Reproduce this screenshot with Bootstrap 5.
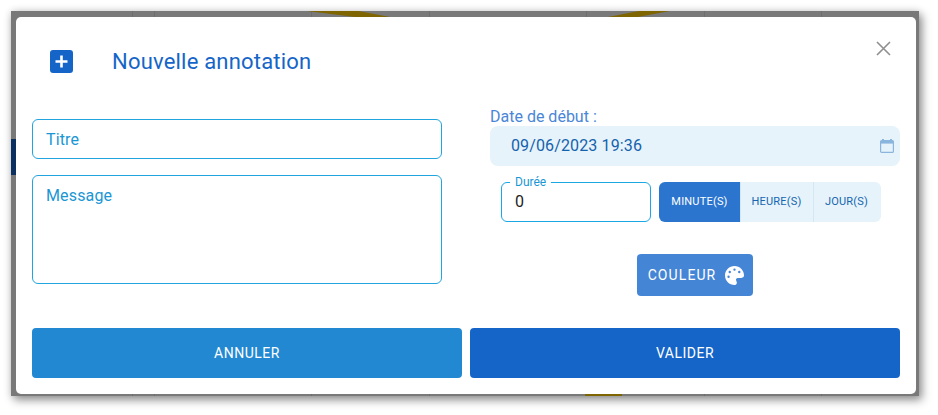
<!DOCTYPE html>
<html lang="fr">
<head>
<meta charset="utf-8">
<title>Nouvelle annotation</title>
<link href="https://cdn.jsdelivr.net/npm/bootstrap@5.3.0/dist/css/bootstrap.min.css" rel="stylesheet">
<style>
html,body{height:100%;overflow:hidden;background:#fff;font-family:Roboto,"Liberation Sans",sans-serif;}
.shot{position:relative;margin:11px 0 0 11px;width:908px;height:385px;padding:6px 3px 2px 5px;
  background-color:#797979;
  background-image:
   linear-gradient(#6e6e6e,#6e6e6e),linear-gradient(#6e6e6e,#6e6e6e),linear-gradient(#6e6e6e,#6e6e6e),
   linear-gradient(#6e6e6e,#6e6e6e),linear-gradient(#6e6e6e,#6e6e6e),linear-gradient(#6e6e6e,#6e6e6e),linear-gradient(#6e6e6e,#6e6e6e);
  background-repeat:no-repeat;
  background-size:1px 100%;
  background-position:121px 0,143px 0,300px 0,418px 0,575px 0,693px 0,810px 0;
  box-shadow:3px 4px 9px rgba(0,0,0,.42),0 0 8px rgba(0,0,0,.12);}
.bg-gold{position:absolute;background:#7f6500;}
.g1{left:296px;top:0;width:83px;height:6px;clip-path:polygon(0 0,62% 0,100% 100%,58% 100%);}
.g2{left:597px;top:0;width:62px;height:6px;clip-path:polygon(50% 0,100% 0,48% 100%,0 100%);}
.g5{left:574px;top:383px;width:37px;height:2px;}
.bg-navy{position:absolute;left:0;top:128px;width:5px;height:36px;background:#0b2f5e;}
.dlg{position:relative;height:377px;background:#fff;border:0;border-radius:5px;padding:0 16px;}
.dlg-head{height:90px;padding:33px 0 0 18px;}
.dlg-plus{width:23px;height:23px;flex:none;}
.dlg-title{margin:0 0 0 39px;font-size:22px;line-height:23px;font-weight:400;color:#1565c8;letter-spacing:.2px;}
.dlg-x{position:absolute;right:25px;top:24px;width:15px;height:15px;padding:0;border:0;background:none;line-height:0;}
.cols{gap:48px;}
.col-side{width:410px;flex:none;}
.col-left{padding-top:12px;}
.fld{border:1px solid #22a5de;border-radius:6px;background:#fff;color:#1a96d4;font-size:16px;padding:0 13px;letter-spacing:.15px;}
.fld-one{height:40px;line-height:40px;}
.fld-area{height:109px;padding-top:9px;line-height:22px;margin-top:16px;}
.date-lab{display:block;margin:0;height:19px;line-height:19px;font-size:16px;color:#4a86d6;}
.date-box{height:40px;background:#e6f3fa;border-radius:8px;padding:0 6px 0 21px;color:#1462ad;font-size:16px;letter-spacing:.13px;}
.dur-row{margin:16px 0 32px 11px;gap:8px;}
.dur-box{position:relative;width:150px;height:40px;border:1px solid #1aa7e4;border-radius:6px;padding:0 13px;line-height:38px;font-size:16px;color:#222;}
.dur-lab{position:absolute;left:8px;top:-8px;padding:0 5px;background:#fff;font-size:12px;line-height:14px;color:#1a96d4;}
.unit-grp{height:40px;width:222px;border-radius:6px;overflow:hidden;background:#e6f3fa;}
.unit-btn{border:0;border-left:1px solid #d3e7f4;padding:1px 0 0;background:transparent;color:#1565b0;font-size:11px;letter-spacing:.2px;height:40px;}
.unit-btn.u1{width:81px;border-left:0;background:#2b75cf;color:#fff;}
.unit-btn.u2{width:73px;padding-right:1px;}
.unit-btn.u3{width:68px;padding-right:2px;}
.color-btn{width:116px;height:42px;background:#4585d6;border:0;border-radius:4px;color:#fff;font-size:14px;letter-spacing:1.1px;padding:0 0 0 2px;gap:9px;}
.color-btn:hover{background:#4585d6;color:#fff;}
.foot{margin-top:32px;gap:8px;}
.act{width:430px;height:50px;border:0;border-radius:4px;color:#fff;font-size:14px;letter-spacing:.5px;padding:0;}
.act-a,.act-a:hover{background:#2388d2;color:#fff;}
.act-b,.act-b:hover{background:#1565c8;color:#fff;}
</style>
</head>
<body>
<div class="shot">
  <span class="bg-gold g1"></span><span class="bg-gold g2"></span><span class="bg-gold g5"></span><span class="bg-navy"></span>
  <div class="dlg">
    <div class="dlg-head d-flex align-items-start">
      <svg class="dlg-plus" viewBox="0 0 23 23" aria-hidden="true"><rect width="23" height="23" rx="3" fill="#1565c8"/><path d="M11.5 5.5v12M5.5 11.5h12" stroke="#fff" stroke-width="2.6"/></svg>
      <h5 class="dlg-title">Nouvelle annotation</h5>
    </div>
    <button class="dlg-x" type="button" aria-label="Fermer"><svg width="15" height="15" viewBox="0 0 15 15"><path d="M1 1l13 13M14 1L1 14" stroke="#8f8f8f" stroke-width="1.6" fill="none"/></svg></button>
    <div class="d-flex cols">
      <div class="col-side col-left">
        <div class="fld fld-one">Titre</div>
        <div class="fld fld-area">Message</div>
      </div>
      <div class="col-side">
        <label class="date-lab">Date de début :</label>
        <div class="date-box d-flex align-items-center justify-content-between">
          <span>09/06/2023 19:36</span>
          <svg width="14" height="14" viewBox="0 0 14 14" aria-hidden="true"><path d="M3 0v2M11 0v2" stroke="#8ab6de" stroke-width="2"/><rect x=".6" y="1.6" width="12.8" height="11.8" rx="1" fill="none" stroke="#8ab6de" stroke-width="1.2"/><rect x="1" y="2" width="12" height="2.6" fill="#8ab6de"/></svg>
        </div>
        <div class="d-flex dur-row">
          <div class="dur-box"><span class="dur-lab">Durée</span>0</div>
          <div class="unit-grp d-flex">
            <button type="button" class="unit-btn u1">MINUTE(S)</button>
            <button type="button" class="unit-btn u2">HEURE(S)</button>
            <button type="button" class="unit-btn u3">JOUR(S)</button>
          </div>
        </div>
        <div class="d-flex justify-content-center" >
          <button type="button" class="btn color-btn d-flex align-items-center justify-content-center">COULEUR
            <svg width="19" height="19" viewBox="0 0 512 512" aria-hidden="true"><path fill="#fff" d="M512 256c0 .9 0 1.8 0 2.7c-.4 36.5-33.6 61.3-70.1 61.3H344c-26.5 0-48 21.5-48 48c0 3.4 .4 6.7 1 9.9c2.1 10.2 6.5 20 10.8 29.9c6.1 13.8 12.1 27.5 12.1 42c0 31.8-21.6 60.7-53.4 62c-3.5 .1-7 .2-10.6 .2C114.6 512 0 397.4 0 256S114.6 0 256 0S512 114.6 512 256zM128 288a32 32 0 1 0 -64 0 32 32 0 1 0 64 0zm0-96a32 32 0 1 0 0-64 32 32 0 1 0 0 64zM288 96a32 32 0 1 0 -64 0 32 32 0 1 0 64 0zm96 96a32 32 0 1 0 0-64 32 32 0 1 0 0 64z"/></svg>
          </button>
        </div>
      </div>
    </div>
    <div class="d-flex foot">
      <button type="button" class="btn act act-a">ANNULER</button>
      <button type="button" class="btn act act-b">VALIDER</button>
    </div>
  </div>
</div>
<script src="https://cdn.jsdelivr.net/npm/bootstrap@5.3.0/dist/js/bootstrap.bundle.min.js"></script>
</body>
</html>
